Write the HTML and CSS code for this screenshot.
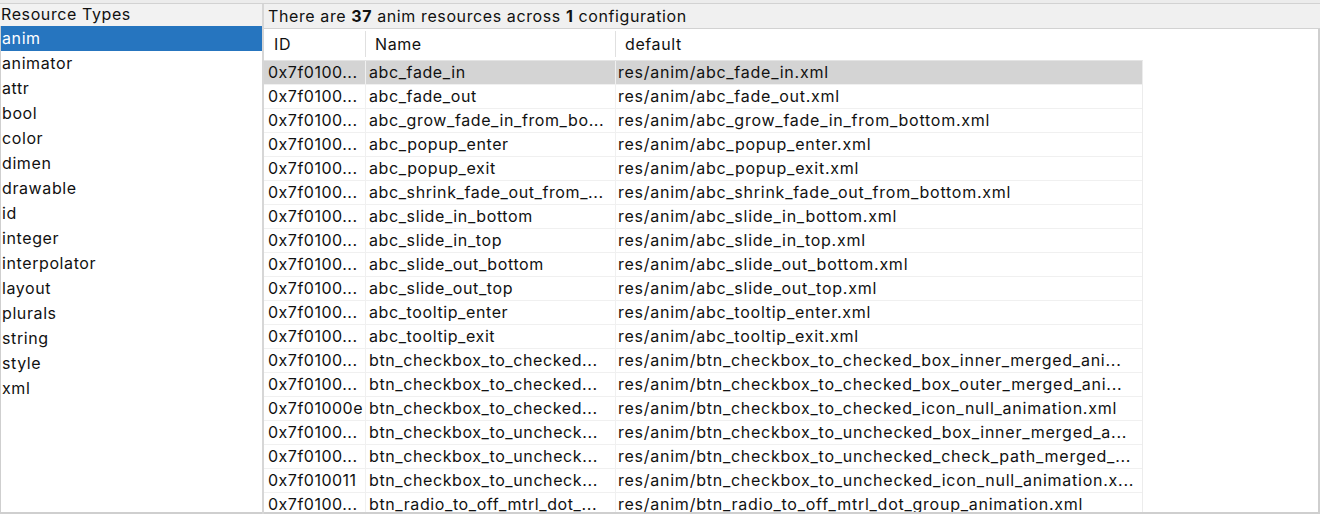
FILE: index.html
```html
<!DOCTYPE html>
<html>
<head>
<meta charset="utf-8">
<link rel="stylesheet" href="styles.css">
</head>
<body>
<div class="app">
  <div class="left">
    <div class="left-title">Resource Types</div>
    <ul class="types">
      <li class="sel">anim</li>
      <li>animator</li>
      <li>attr</li>
      <li>bool</li>
      <li>color</li>
      <li>dimen</li>
      <li>drawable</li>
      <li>id</li>
      <li>integer</li>
      <li>interpolator</li>
      <li>layout</li>
      <li>plurals</li>
      <li>string</li>
      <li>style</li>
      <li>xml</li>
    </ul>
  </div>
  <div class="splitter"></div>
  <div class="right">
    <div class="summary">There are <b>37</b> anim resources across <b>1</b> configuration</div>
    <div class="tablewrap">
      <div class="thead">
        <div class="th c-id">ID</div>
        <div class="th c-name">Name</div>
        <div class="th c-def">default</div>
      </div>
      <div class="tbody">
        <div class="tr sel"><div class="td c-id">0x7f0100...</div><div class="td c-name">abc_fade_in</div><div class="td c-def">res/anim/abc_fade_in.xml</div></div>
        <div class="tr"><div class="td c-id">0x7f0100...</div><div class="td c-name">abc_fade_out</div><div class="td c-def">res/anim/abc_fade_out.xml</div></div>
        <div class="tr"><div class="td c-id">0x7f0100...</div><div class="td c-name">abc_grow_fade_in_from_bo...</div><div class="td c-def">res/anim/abc_grow_fade_in_from_bottom.xml</div></div>
        <div class="tr"><div class="td c-id">0x7f0100...</div><div class="td c-name">abc_popup_enter</div><div class="td c-def">res/anim/abc_popup_enter.xml</div></div>
        <div class="tr"><div class="td c-id">0x7f0100...</div><div class="td c-name">abc_popup_exit</div><div class="td c-def">res/anim/abc_popup_exit.xml</div></div>
        <div class="tr"><div class="td c-id">0x7f0100...</div><div class="td c-name">abc_shrink_fade_out_from_...</div><div class="td c-def">res/anim/abc_shrink_fade_out_from_bottom.xml</div></div>
        <div class="tr"><div class="td c-id">0x7f0100...</div><div class="td c-name">abc_slide_in_bottom</div><div class="td c-def">res/anim/abc_slide_in_bottom.xml</div></div>
        <div class="tr"><div class="td c-id">0x7f0100...</div><div class="td c-name">abc_slide_in_top</div><div class="td c-def">res/anim/abc_slide_in_top.xml</div></div>
        <div class="tr"><div class="td c-id">0x7f0100...</div><div class="td c-name">abc_slide_out_bottom</div><div class="td c-def">res/anim/abc_slide_out_bottom.xml</div></div>
        <div class="tr"><div class="td c-id">0x7f0100...</div><div class="td c-name">abc_slide_out_top</div><div class="td c-def">res/anim/abc_slide_out_top.xml</div></div>
        <div class="tr"><div class="td c-id">0x7f0100...</div><div class="td c-name">abc_tooltip_enter</div><div class="td c-def">res/anim/abc_tooltip_enter.xml</div></div>
        <div class="tr"><div class="td c-id">0x7f0100...</div><div class="td c-name">abc_tooltip_exit</div><div class="td c-def">res/anim/abc_tooltip_exit.xml</div></div>
        <div class="tr"><div class="td c-id">0x7f0100...</div><div class="td c-name">btn_checkbox_to_checked...</div><div class="td c-def">res/anim/btn_checkbox_to_checked_box_inner_merged_ani...</div></div>
        <div class="tr"><div class="td c-id">0x7f0100...</div><div class="td c-name">btn_checkbox_to_checked...</div><div class="td c-def">res/anim/btn_checkbox_to_checked_box_outer_merged_ani...</div></div>
        <div class="tr"><div class="td c-id">0x7f01000e</div><div class="td c-name">btn_checkbox_to_checked...</div><div class="td c-def">res/anim/btn_checkbox_to_checked_icon_null_animation.xml</div></div>
        <div class="tr"><div class="td c-id">0x7f0100...</div><div class="td c-name">btn_checkbox_to_uncheck...</div><div class="td c-def">res/anim/btn_checkbox_to_unchecked_box_inner_merged_a...</div></div>
        <div class="tr"><div class="td c-id">0x7f0100...</div><div class="td c-name">btn_checkbox_to_uncheck...</div><div class="td c-def">res/anim/btn_checkbox_to_unchecked_check_path_merged_...</div></div>
        <div class="tr"><div class="td c-id">0x7f010011</div><div class="td c-name">btn_checkbox_to_uncheck...</div><div class="td c-def">res/anim/btn_checkbox_to_unchecked_icon_null_animation.x...</div></div>
        <div class="tr"><div class="td c-id">0x7f0100...</div><div class="td c-name">btn_radio_to_off_mtrl_dot_...</div><div class="td c-def">res/anim/btn_radio_to_off_mtrl_dot_group_animation.xml</div></div>
      </div>
    </div>
  </div>
</div>
</body>
</html>
```
FILE: styles.css
```css
* { box-sizing: border-box; }
html, body { margin: 0; padding: 0; }
body {
  width: 1320px;
  height: 514px;
  overflow: hidden;
  background: #ececec;
  font-family: Inter, "Liberation Sans", sans-serif;
  font-size: 16px;
  letter-spacing: 0.6px;
  color: #111;
}
.app {
  display: flex;
  height: 514px;
  padding-top: 3px;
}
.app > * { border-top: 1px solid #d2d2d2; }
.left {
  width: 262px;
  display: flex;
  flex-direction: column;
  background: #f2f2f2;
}
.left-title {
  height: 22px;
  line-height: 21px;
  padding-left: 1px;
  letter-spacing: 0.6px;
}
.types {
  flex: 1;
  list-style: none;
  margin: 0;
  padding: 0;
  background: #fff;
  border-left: 1px solid #cfcfcf;
  border-bottom: 2px solid #cfcfcf;
}
.types li {
  height: 25px;
  line-height: 25px;
  padding-left: 1px;
}
.types li.sel {
  background: #2675bf;
  color: #fff;
}
.splitter {
  width: 2px;
  background: #d6d6d6;
}
.right {
  flex: 1;
  display: flex;
  flex-direction: column;
  background: #f0f0f0;
}
.summary {
  height: 25px;
  line-height: 24px;
  padding-left: 4px;
  border-bottom: 1px solid #d2d2d2;
  white-space: nowrap;
}
.summary b { font-weight: 700; }
.tablewrap {
  flex: 1;
  background: #fff;
  border-right: 2px solid #cfcfcf;
  border-bottom: 2px solid #cfcfcf;
  overflow: hidden;
}
.thead {
  display: flex;
  height: 31px;
  align-items: stretch;
}
.th {
  position: relative;
  line-height: 31px;
  padding-left: 10px;
}
.thead .th + .th::before {
  content: "";
  position: absolute;
  left: 0;
  top: 2px;
  bottom: 3px;
  width: 1px;
  background: #e0e0e0;
}
.c-id { width: 101px; flex: none; }
.c-name { width: 250px; flex: none; }
.c-def { width: 528px; flex: none; }
.tbody {
  width: 879px;
  border-top: 1px solid #e4e4e4;
  border-right: 1px solid #ececec;
}
.tr {
  display: flex;
  height: 24px;
  border-bottom: 1px solid #f0f0f0;
}
.tr.sel { background: #d4d4d4; }
.td {
  line-height: 23px;
  white-space: nowrap;
  overflow: hidden;
}
.td + .td { border-left: 1px solid #f0f0f0; }
.tr .c-id { padding-left: 4px; letter-spacing: 0.5px; }
.tr .c-name { padding-left: 3px; }
.tr .c-def { padding-left: 2px; letter-spacing: 0.75px; }
```
